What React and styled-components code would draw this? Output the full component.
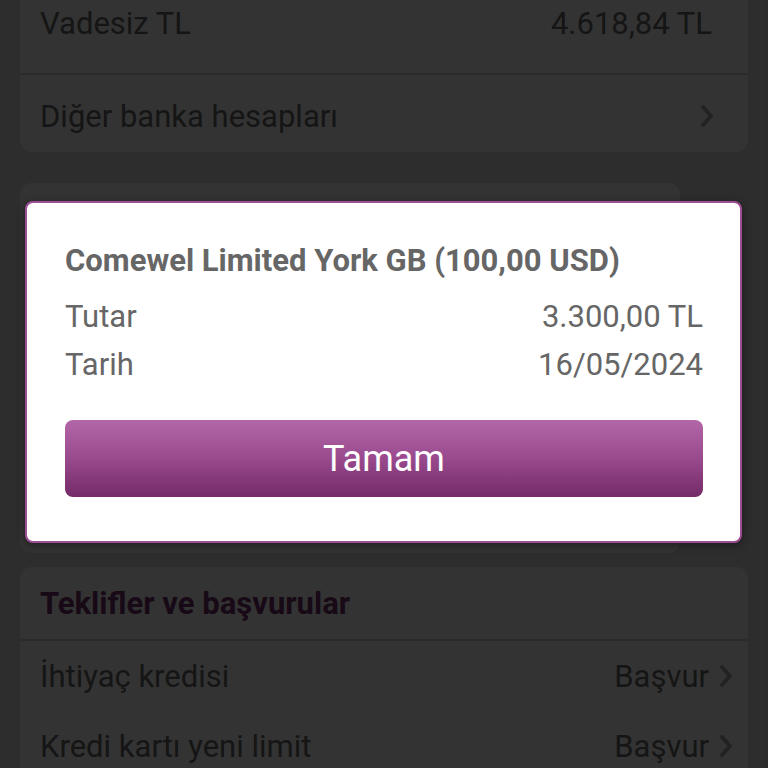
import React from 'react'
import styled, { createGlobalStyle } from 'styled-components'

const GlobalStyle = createGlobalStyle`
  html, body {
    margin: 0;
    padding: 0;
    background: #dedede;
    font-family: Roboto, "Liberation Sans", sans-serif;
  }
`

const Screen = styled.div`
  position: relative;
  width: 768px;
  height: 768px;
  overflow: hidden;
  background: #dedede;
`

// page is scrolled a bit, first card starts above the fold
const Scroller = styled.div`
  display: flex;
  flex-direction: column;
  align-items: flex-start;
  padding: 0 20px;
  margin-top: -26px;
`

const Card = styled.div`
  width: ${({ w }) => w || '728px'};
  height: ${({ h }) => h || 'auto'};
  margin-top: ${({ mt }) => mt || '0'};
  background: #ffffff;
  border-radius: 12px;
  display: flex;
  flex-direction: column;
  overflow: hidden;
`

const Row = styled.div`
  display: flex;
  align-items: center;
  justify-content: space-between;
  height: ${({ h }) => h}px;
  padding: ${({ pt }) => pt || 0}px ${({ pr }) => pr || 36}px 0 20px;
  font-size: 31px;
  color: #6a6a6a;
  border-bottom: ${({ line }) => (line ? '2px solid #d8d8d8' : 'none')};
  box-sizing: border-box;
`

const RowTitle = styled.span`
  font-size: 31px;
  font-weight: 700;
  color: #7b2f70;
`

const Right = styled.span`
  display: flex;
  align-items: center;
  gap: 8px;
`

const Chevron = () => (
  <svg width="18" height="28" viewBox="0 0 18 28">
    <path d="M5 5 L13 14 L5 23" fill="none" stroke="#a8a8a8" strokeWidth="4" strokeLinecap="round" strokeLinejoin="round" />
  </svg>
)

const Overlay = styled.div`
  position: absolute;
  inset: 0;
  background: rgba(0, 0, 0, 0.8);
  display: flex;
  align-items: flex-start;
  padding: 201px 0 0 25px;
`

const Modal = styled.div`
  width: 717px;
  box-sizing: border-box;
  background: #ffffff;
  border: 2px solid #9e4f94;
  border-radius: 8px;
  padding: 34px 37px 44px 38px;
  box-shadow: 0 2px 8px rgba(0, 0, 0, 0.4);
`

const ModalTitle = styled.div`
  font-size: 31px;
  font-weight: 700;
  color: #666666;
  line-height: 48px;
  margin-bottom: 8px;
`

const InfoRow = styled.div`
  display: flex;
  justify-content: space-between;
  font-size: 31px;
  line-height: 48px;
  color: #666666;
`

const OkButton = styled.button`
  display: block;
  width: 100%;
  height: 77px;
  margin-top: 31px;
  border: none;
  border-radius: 8px;
  background: linear-gradient(180deg, #b267a8 0%, #9c4d91 45%, #742a68 100%);
  color: #ffffff;
  font-family: Roboto, "Liberation Sans", sans-serif;
  font-size: 36px;
  font-weight: 400;
  cursor: pointer;
`

export default function App() {
  return (
    <>
      <GlobalStyle />
      <Screen>
        <Scroller>
          <Card>
            <Row h={101} line>
              <span>Vadesiz TL</span>
              <span>4.618,84 TL</span>
            </Row>
            <Row h={77} pt={5} pr={32}>
              <span>Diğer banka hesapları</span>
              <Chevron />
            </Row>
          </Card>

          <Card w="660px" h="370px" mt="31px" />

          <Card mt="14px">
            <Row h={74} line>
              <RowTitle>Teklifler ve başvurular</RowTitle>
            </Row>
            <Row h={70} pr={13}>
              <span>İhtiyaç kredisi</span>
              <Right>Başvur <Chevron /></Right>
            </Row>
            <Row h={70} pr={13}>
              <span>Kredi kartı yeni limit</span>
              <Right>Başvur <Chevron /></Right>
            </Row>
          </Card>
        </Scroller>

        <Overlay>
          <Modal>
            <ModalTitle>Comewel Limited York GB (100,00 USD)</ModalTitle>
            <InfoRow>
              <span>Tutar</span>
              <span>3.300,00 TL</span>
            </InfoRow>
            <InfoRow>
              <span>Tarih</span>
              <span>16/05/2024</span>
            </InfoRow>
            <OkButton>Tamam</OkButton>
          </Modal>
        </Overlay>
      </Screen>
    </>
  )
}
